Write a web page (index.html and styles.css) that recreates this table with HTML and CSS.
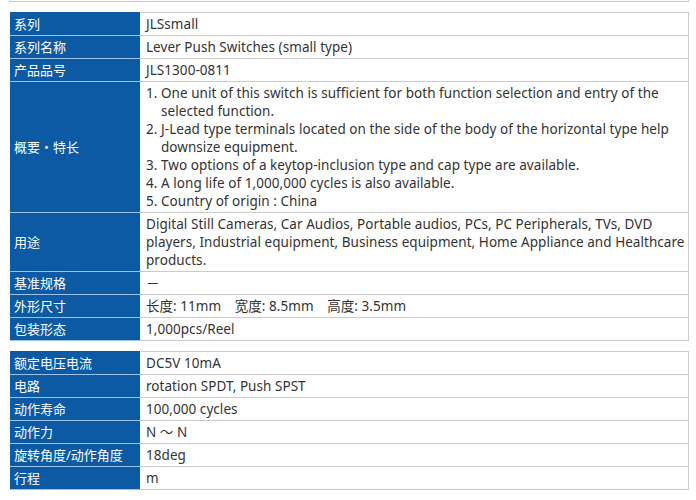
FILE: index.html
```html
<!DOCTYPE html>
<html lang="zh">
<head>
<meta charset="utf-8">
<link rel="stylesheet" href="styles.css">
</head>
<body>
<div class="prev-box"></div>
<table class="spec">
<tr><th>系列</th><td>JLSsmall</td></tr>
<tr><th>系列名称</th><td>Lever Push Switches (small type)</td></tr>
<tr><th>产品品号</th><td>JLS1300-0811</td></tr>
<tr><th>概要・特长</th><td>
<div class="item">1. One unit of this switch is sufficient for both function selection and entry of the selected function.</div>
<div class="item">2. J-Lead type terminals located on the side of the body of the horizontal type help downsize equipment.</div>
<div class="item">3. Two options of a keytop-inclusion type and cap type are available.</div>
<div class="item">4. A long life of 1,000,000 cycles is also available.</div>
<div class="item">5. Country of origin : China</div>
</td></tr>
<tr><th>用途</th><td>Digital Still Cameras, Car Audios, Portable audios, PCs, PC Peripherals, TVs, DVD players, Industrial equipment, Business equipment, Home Appliance and Healthcare products.</td></tr>
<tr><th>基准规格</th><td>－</td></tr>
<tr><th>外形尺寸</th><td>长度: 11mm　宽度: 8.5mm　高度: 3.5mm</td></tr>
<tr><th>包装形态</th><td>1,000pcs/Reel</td></tr>
</table>
<table class="spec">
<tr><th>额定电压电流</th><td>DC5V 10mA</td></tr>
<tr><th>电路</th><td>rotation SPDT, Push SPST</td></tr>
<tr><th>动作寿命</th><td>100,000 cycles</td></tr>
<tr><th>动作力</th><td>N ～ N</td></tr>
<tr><th>旋转角度/动作角度</th><td>18deg</td></tr>
<tr><th>行程</th><td>m</td></tr>
</table>
</body>
</html>
```

FILE: styles.css
```css
html, body {
  margin: 0;
  padding: 0;
  background: #fff;
}
body {
  font-family: "Noto Sans", "Noto Sans CJK SC", sans-serif;
  font-size: 13px;
  color: #333;
  padding: 0 7px 0 9px;
}
.prev-box {
  height: 1px;
  border: 1px solid #cccccc;
  border-top: none;
  margin-bottom: 10px;
}
.spec {
  width: 679px;
  margin-left: 1px;
  border-collapse: collapse;
  margin-bottom: 10px;
}
.spec th, .spec td {
  line-height: 18px;
  padding: 2px 5px 2px 5px;
  text-align: left;
  vertical-align: middle;
}
.spec th {
  width: 121px;
  background: #0b5aa3;
  color: #fff;
  font-weight: normal;
  font-size: 13px;
  padding-left: 4px;
  border-bottom: 1px solid #9dc3e6;
  border-right: 1px solid #ffffff;
}
.spec td {
  font-size: 13.5px;
  letter-spacing: 0.05px;
  padding-right: 1px;
  border: 1px solid #cccccc;
  border-left: none;
  border-top: none;
}
.spec tr:first-child td {
  border-top: 1px solid #cccccc;
}
.spec tr:first-child th {
  border-top: 1px solid #0b5aa3;
}
.item {
  padding-left: 15px;
  text-indent: -15px;
}
```
